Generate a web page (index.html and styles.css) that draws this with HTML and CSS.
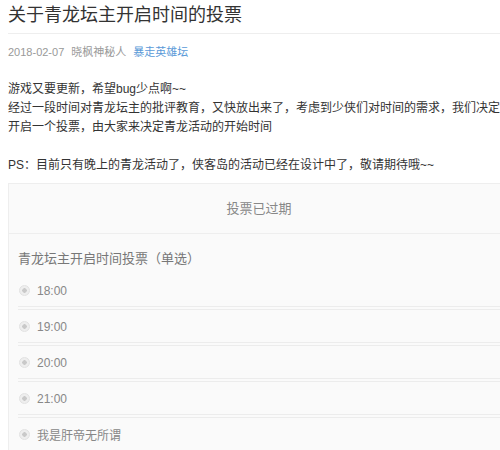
FILE: index.html
```html
<!DOCTYPE html>
<html lang="zh">
<head>
<meta charset="utf-8">
<title>关于青龙坛主开启时间的投票</title>
<link rel="stylesheet" href="styles.css">
</head>
<body>
<h1 class="title">关于青龙坛主开启时间的投票</h1>
<div class="meta"><span>2018-02-07</span><span>晓枫神秘人</span><a class="meta-link" href="#">暴走英雄坛</a></div>
<div class="content">
<p class="line">游戏又要更新，希望bug少点啊~~</p>
<p class="line">经过一段时间对青龙坛主的批评教育，又快放出来了，考虑到少侠们对时间的需求，我们决定</p>
<p class="line">开启一个投票，由大家来决定青龙活动的开始时间</p>
<p class="line">&nbsp;</p>
<p class="line">PS：目前只有晚上的青龙活动了，侠客岛的活动已经在设计中了，敬请期待哦~~</p>
</div>
<div class="poll">
<div class="poll-head">投票已过期</div>
<div class="poll-body">
<div class="poll-q">青龙坛主开启时间投票（单选）</div>
<ul class="options">
<li class="option"><span class="radio"></span>18:00</li>
<li class="option"><span class="radio"></span>19:00</li>
<li class="option"><span class="radio"></span>20:00</li>
<li class="option"><span class="radio"></span>21:00</li>
<li class="option"><span class="radio"></span>我是肝帝无所谓</li>
</ul>
</div>
</div>
</body>
</html>
```
FILE: styles.css
```css
html, body {
  overflow: hidden;
}
body {
  margin: 0;
  padding-left: 8px;
  background: #fff;
  font-family: "Liberation Sans", "Noto Sans CJK SC", sans-serif;
  color: #333;
}
.title {
  margin: 0;
  padding: 3px 0 6px;
  font-size: 18px;
  line-height: 24px;
  font-weight: normal;
  color: #333;
  border-bottom: 1px solid #eee;
  width: 500px;
}
.meta {
  margin-top: 10px;
  font-size: 11px;
  line-height: 16px;
  color: #999;
  display: flex;
  gap: 7px;
}
.meta-link {
  color: #5a9ad8;
  text-decoration: none;
}
.content {
  margin-top: 20px;
}
.line {
  margin: 0;
  font-size: 12px;
  line-height: 19px;
  white-space: nowrap;
  color: #333;
}
.poll {
  margin-top: 8px;
  width: 500px;
  border: 1px solid #eee;
  background: #fafafa;
}
.poll-head {
  height: 49px;
  line-height: 49px;
  text-align: center;
  font-size: 13px;
  color: #888;
  border-bottom: 1px solid #eee;
}
.poll-body {
  padding: 15px 0 0 9px;
}
.poll-q {
  font-size: 13px;
  line-height: 20px;
  color: #777;
}
.options {
  list-style: none;
  margin: 5px 0 0;
  padding: 0;
}
.option {
  box-sizing: border-box;
  height: 36px;
  padding-top: 1px;
  display: flex;
  align-items: center;
  font-size: 12px;
  color: #888;
  border-bottom: 4px double #ececec;
}
.radio {
  width: 9px;
  height: 9px;
  margin: 0 7px 0 1px;
  border-radius: 50%;
  border: 1px solid #e2e2e2;
  background: radial-gradient(circle, #c9c9c9 0 2px, #eee 2.5px);
}
```
